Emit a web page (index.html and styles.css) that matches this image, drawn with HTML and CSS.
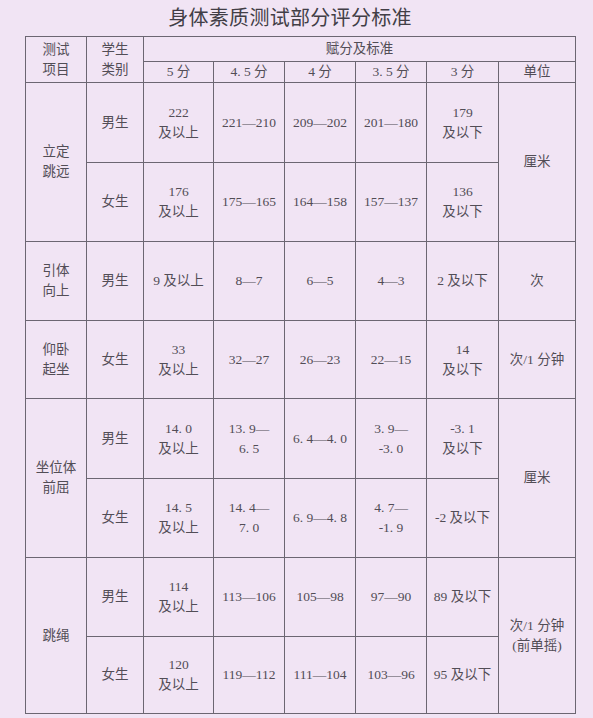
FILE: index.html
```html
<!DOCTYPE html>
<html lang="zh">
<head>
<meta charset="utf-8">
<title>身体素质测试部分评分标准</title>
<link rel="stylesheet" href="styles.css">
</head>
<body>
<div class="page">
  <h1 class="title">身体素质测试部分评分标准</h1>
  <table class="score">
    <colgroup>
      <col class="c-item"><col class="c-kind"><col class="c-s5"><col class="c-s45"><col class="c-s4"><col class="c-s35"><col class="c-s3"><col class="c-unit">
    </colgroup>
    <tr class="h1">
      <td rowspan="2">测试<br>项目</td>
      <td rowspan="2">学生<br>类别</td>
      <td colspan="6">赋分及标准</td>
    </tr>
    <tr class="h2">
      <td>5 分</td><td>4. 5 分</td><td>4 分</td><td>3. 5 分</td><td>3 分</td><td>单位</td>
    </tr>
    <tr class="r1">
      <td rowspan="2">立定<br>跳远</td>
      <td>男生</td><td>222<br>及以上</td><td>221—210</td><td>209—202</td><td>201—180</td><td>179<br>及以下</td>
      <td rowspan="2">厘米</td>
    </tr>
    <tr class="r2">
      <td>女生</td><td>176<br>及以上</td><td>175—165</td><td>164—158</td><td>157—137</td><td>136<br>及以下</td>
    </tr>
    <tr class="r3">
      <td>引体<br>向上</td><td>男生</td><td>9 及以上</td><td>8—7</td><td>6—5</td><td>4—3</td><td>2 及以下</td><td>次</td>
    </tr>
    <tr class="r4">
      <td>仰卧<br>起坐</td><td>女生</td><td>33<br>及以上</td><td>32—27</td><td>26—23</td><td>22—15</td><td>14<br>及以下</td><td>次/1 分钟</td>
    </tr>
    <tr class="r5">
      <td rowspan="2">坐位体<br>前屈</td>
      <td>男生</td><td>14. 0<br>及以上</td><td>13. 9—<br>6. 5</td><td>6. 4—4. 0</td><td>3. 9—<br>-3. 0</td><td>-3. 1<br>及以下</td>
      <td rowspan="2">厘米</td>
    </tr>
    <tr class="r6">
      <td>女生</td><td>14. 5<br>及以上</td><td>14. 4—<br>7. 0</td><td>6. 9—4. 8</td><td>4. 7—<br>-1. 9</td><td>-2 及以下</td>
    </tr>
    <tr class="r7">
      <td rowspan="2">跳绳</td>
      <td>男生</td><td>114<br>及以上</td><td>113—106</td><td>105—98</td><td>97—90</td><td>89 及以下</td>
      <td rowspan="2">次/1 分钟<br>(前单摇)</td>
    </tr>
    <tr class="r8">
      <td>女生</td><td>120<br>及以上</td><td>119—112</td><td>111—104</td><td>103—96</td><td>95 及以下</td>
    </tr>
  </table>
</div>
</body>
</html>
```

FILE: styles.css
```css
html, body {
  margin: 0;
  padding: 0;
}
body {
  background: #f1e4f4;
  width: 593px;
  height: 718px;
  overflow: hidden;
  font-family: "Liberation Serif", "Noto Sans CJK SC", serif;
  color: #524d56;
}
.page {
  display: flex;
  flex-direction: column;
}
.title {
  margin: 0;
  padding-top: 7px;
  width: 580px;
  text-align: center;
  font-family: "Noto Sans CJK SC", sans-serif;
  font-weight: 400;
  font-size: 20px;
  line-height: 20px;
  letter-spacing: 0.3px;
  color: #423e46;
}
.score {
  margin: 9px 0 0 25px;
  border-collapse: collapse;
  table-layout: fixed;
  width: 551px;
  font-size: 13.5px;
  line-height: 20px;
}
.score td {
  border: 1px solid #6c6672;
  padding: 0;
  text-align: center;
  vertical-align: middle;
  white-space: nowrap;
}
.c-item { width: 61px; }
.c-kind { width: 57px; }
.c-s5 { width: 70px; }
.c-s45 { width: 71px; }
.c-s4 { width: 71px; }
.c-s35 { width: 71px; }
.c-s3 { width: 72px; }
.c-unit { width: 77px; }
.h1 { height: 25px; }
.h2 { height: 21px; }
.r1 { height: 80px; }
.r2 { height: 79px; }
.r3 { height: 79px; }
.r4 { height: 78px; }
.r5 { height: 80px; }
.r6 { height: 79px; }
.r7 { height: 79px; }
.r8 { height: 77px; }
```
